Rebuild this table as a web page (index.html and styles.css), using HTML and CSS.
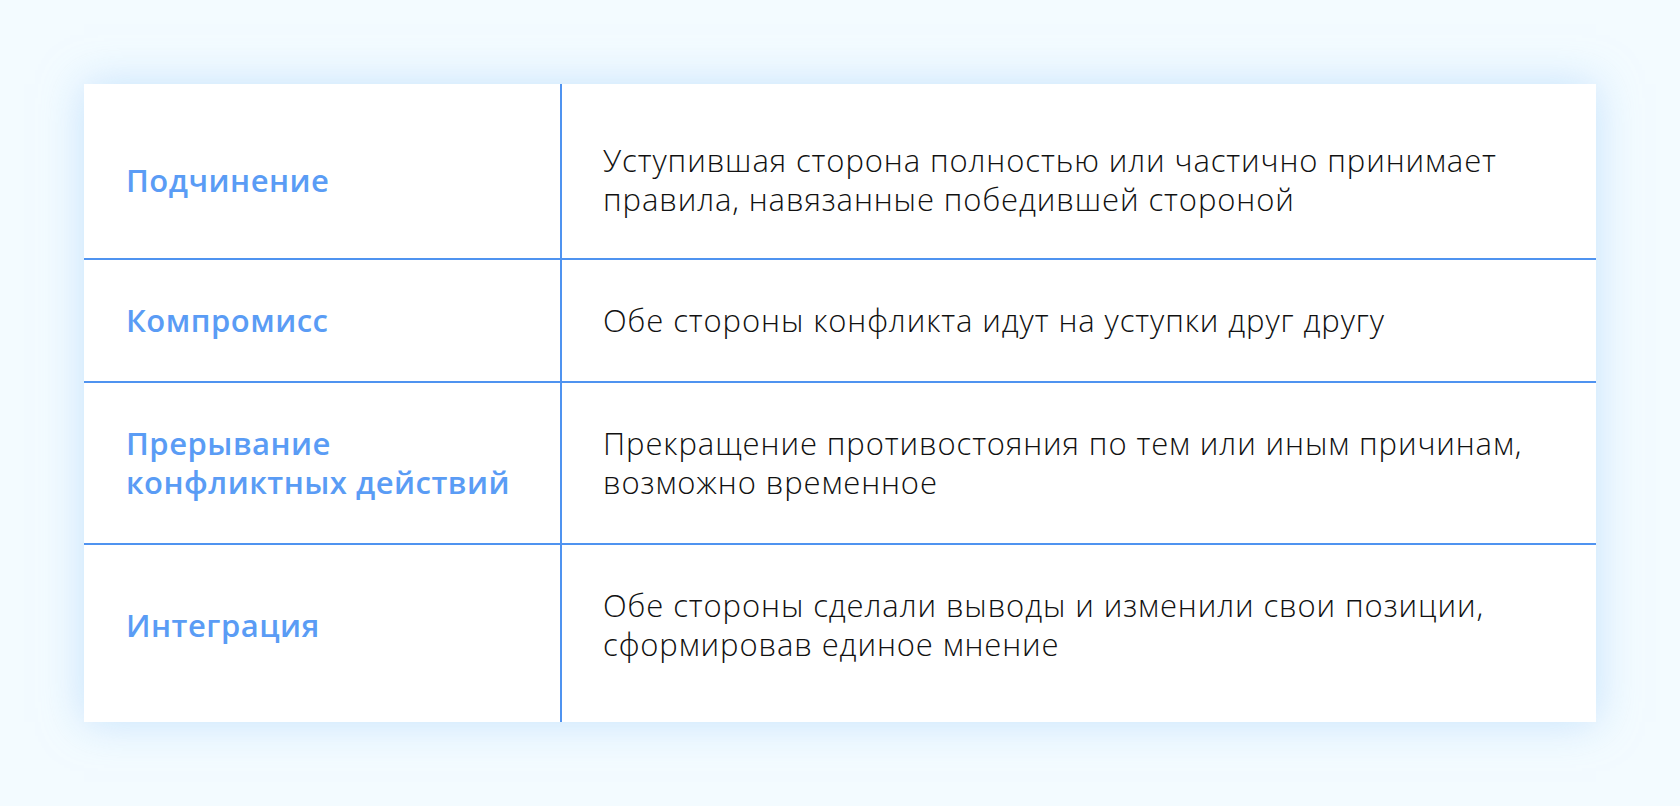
FILE: index.html
```html
<!DOCTYPE html>
<html lang="ru">
<head>
<meta charset="utf-8">
<title>Способы завершения конфликта</title>
<link rel="stylesheet" href="styles.css">
</head>
<body>
<div class="page">
  <div class="table">
    <div class="row first">
      <div class="cell label">Подчинение</div>
      <div class="cell text">Уступившая сторона полностью или частично принимает<br>правила, навязанные победившей стороной</div>
    </div>
    <div class="row">
      <div class="cell label">Компромисс</div>
      <div class="cell text">Обе стороны конфликта идут на уступки друг другу</div>
    </div>
    <div class="row">
      <div class="cell label">Прерывание<br>конфликтных действий</div>
      <div class="cell text">Прекращение противостояния по тем или иным причинам,<br>возможно временное</div>
    </div>
    <div class="row last">
      <div class="cell label">Интеграция</div>
      <div class="cell text">Обе стороны сделали выводы и изменили свои позиции,<br>сформировав единое мнение</div>
    </div>
  </div>
</div>
</body>
</html>
```

FILE: styles.css
```css
html, body {
  margin: 0;
  padding: 0;
  background: #f3fbff;
}
.page {
  width: 1680px;
  height: 806px;
  box-sizing: border-box;
  padding: 84px;
}
.table {
  background: #ffffff;
  box-shadow: 0 0 40px rgba(160, 205, 250, 0.55);
  display: flex;
  flex-direction: column;
  height: 638px;
}
.row {
  display: grid;
  grid-template-columns: 478px 1fr;
  border-bottom: 2px solid #4f93f0;
}
.row.last {
  border-bottom: none;
  flex: 1;
}
.cell {
  padding: 41px 42px;
  display: flex;
  align-items: center;
  line-height: 39px;
  font-size: 31px;
}
.row.first .cell {
  padding-top: 57px;
  padding-bottom: 39px;
}
.row.last .cell {
  padding-top: 40px;
  padding-bottom: 57px;
}
.label {
  border-right: 2px solid #4f93f0;
  font-family: "Open Sans", sans-serif;
  font-weight: 600;
  letter-spacing: 0.5px;
  color: #5a9cf5;
}
.text {
  padding-left: 41px;
  font-family: "Open Sans", sans-serif;
  font-weight: 340;
  letter-spacing: 0.9px;
  color: #111111;
}
```
